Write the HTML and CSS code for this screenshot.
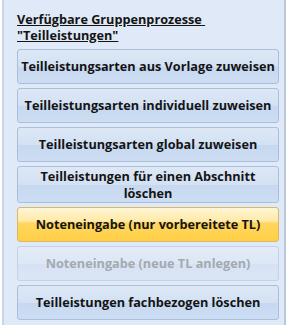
FILE: index.html
```html
<!DOCTYPE html>
<html lang="de">
<head>
<meta charset="utf-8">
<link rel="stylesheet" href="styles.css">
</head>
<body>
<div class="frame">
  <div class="panel">
    <div class="title"><span class="u">Verfügbare Gruppenprozesse&nbsp;</span><br><span class="u">"Teilleistungen"</span></div>
    <div class="list">
      <div class="btn">Teilleistungsarten aus Vorlage zuweisen</div>
      <div class="btn">Teilleistungsarten individuell zuweisen</div>
      <div class="btn">Teilleistungsarten global zuweisen</div>
      <div class="btn two">Teilleistungen für einen Abschnitt löschen</div>
      <div class="btn hot">Noteneingabe (nur vorbereitete TL)</div>
      <div class="btn off">Noteneingabe (neue TL anlegen)</div>
      <div class="btn">Teilleistungen fachbezogen löschen</div>
    </div>
  </div>
</div>
</body>
</html>
```
FILE: styles.css
```css
html, body {
  margin: 0;
  padding: 0;
  background: #ffffff;
}
body {
  font-family: "Open Sans", "Noto Sans", sans-serif;
  font-weight: 700;
  font-size: 12.7px;
  color: #141414;
}
.frame {
  margin-left: 2px;
  width: 284px;
  height: 325px;
  box-sizing: border-box;
  border-left: 2px solid #c7d5e8;
  border-right: 2px solid #b9c7da;
  background: #dfe9f7;
  overflow: hidden;
}
.panel {
  padding: 11px 0 0 13px;
}
.title {
  line-height: 16px;
  height: 38px;
  font-size: 12.7px;
}
.u {
  text-decoration: underline;
}
.list {
  display: flex;
  flex-direction: column;
  gap: 4px;
  width: 262px;
}
.btn {
  box-sizing: border-box;
  height: 35px;
  border: 1px solid #a9bfdc;
  border-radius: 3px;
  background: linear-gradient(#dde8f6 0%, #d3e1f3 50%, #c6d8f0 51%, #cddef3 100%);
  display: flex;
  align-items: center;
  justify-content: center;
  text-align: center;
  line-height: 17px;
  padding: 0 4px;
  white-space: nowrap;
}
.two {
  height: 37px;
  white-space: normal;
  padding: 0 20px;
}
.hot {
  border-color: #d9b86a;
  background: linear-gradient(#fff6d6 0%, #ffe9a6 40%, #ffd660 45%, #ffcf45 100%);
}
.off {
  color: #a4a9b0;
  border-color: #c4d2e5;
  background: linear-gradient(#e3ecf8 0%, #dde7f5 50%, #d6e2f3 51%, #dbe6f5 100%);
}
```
